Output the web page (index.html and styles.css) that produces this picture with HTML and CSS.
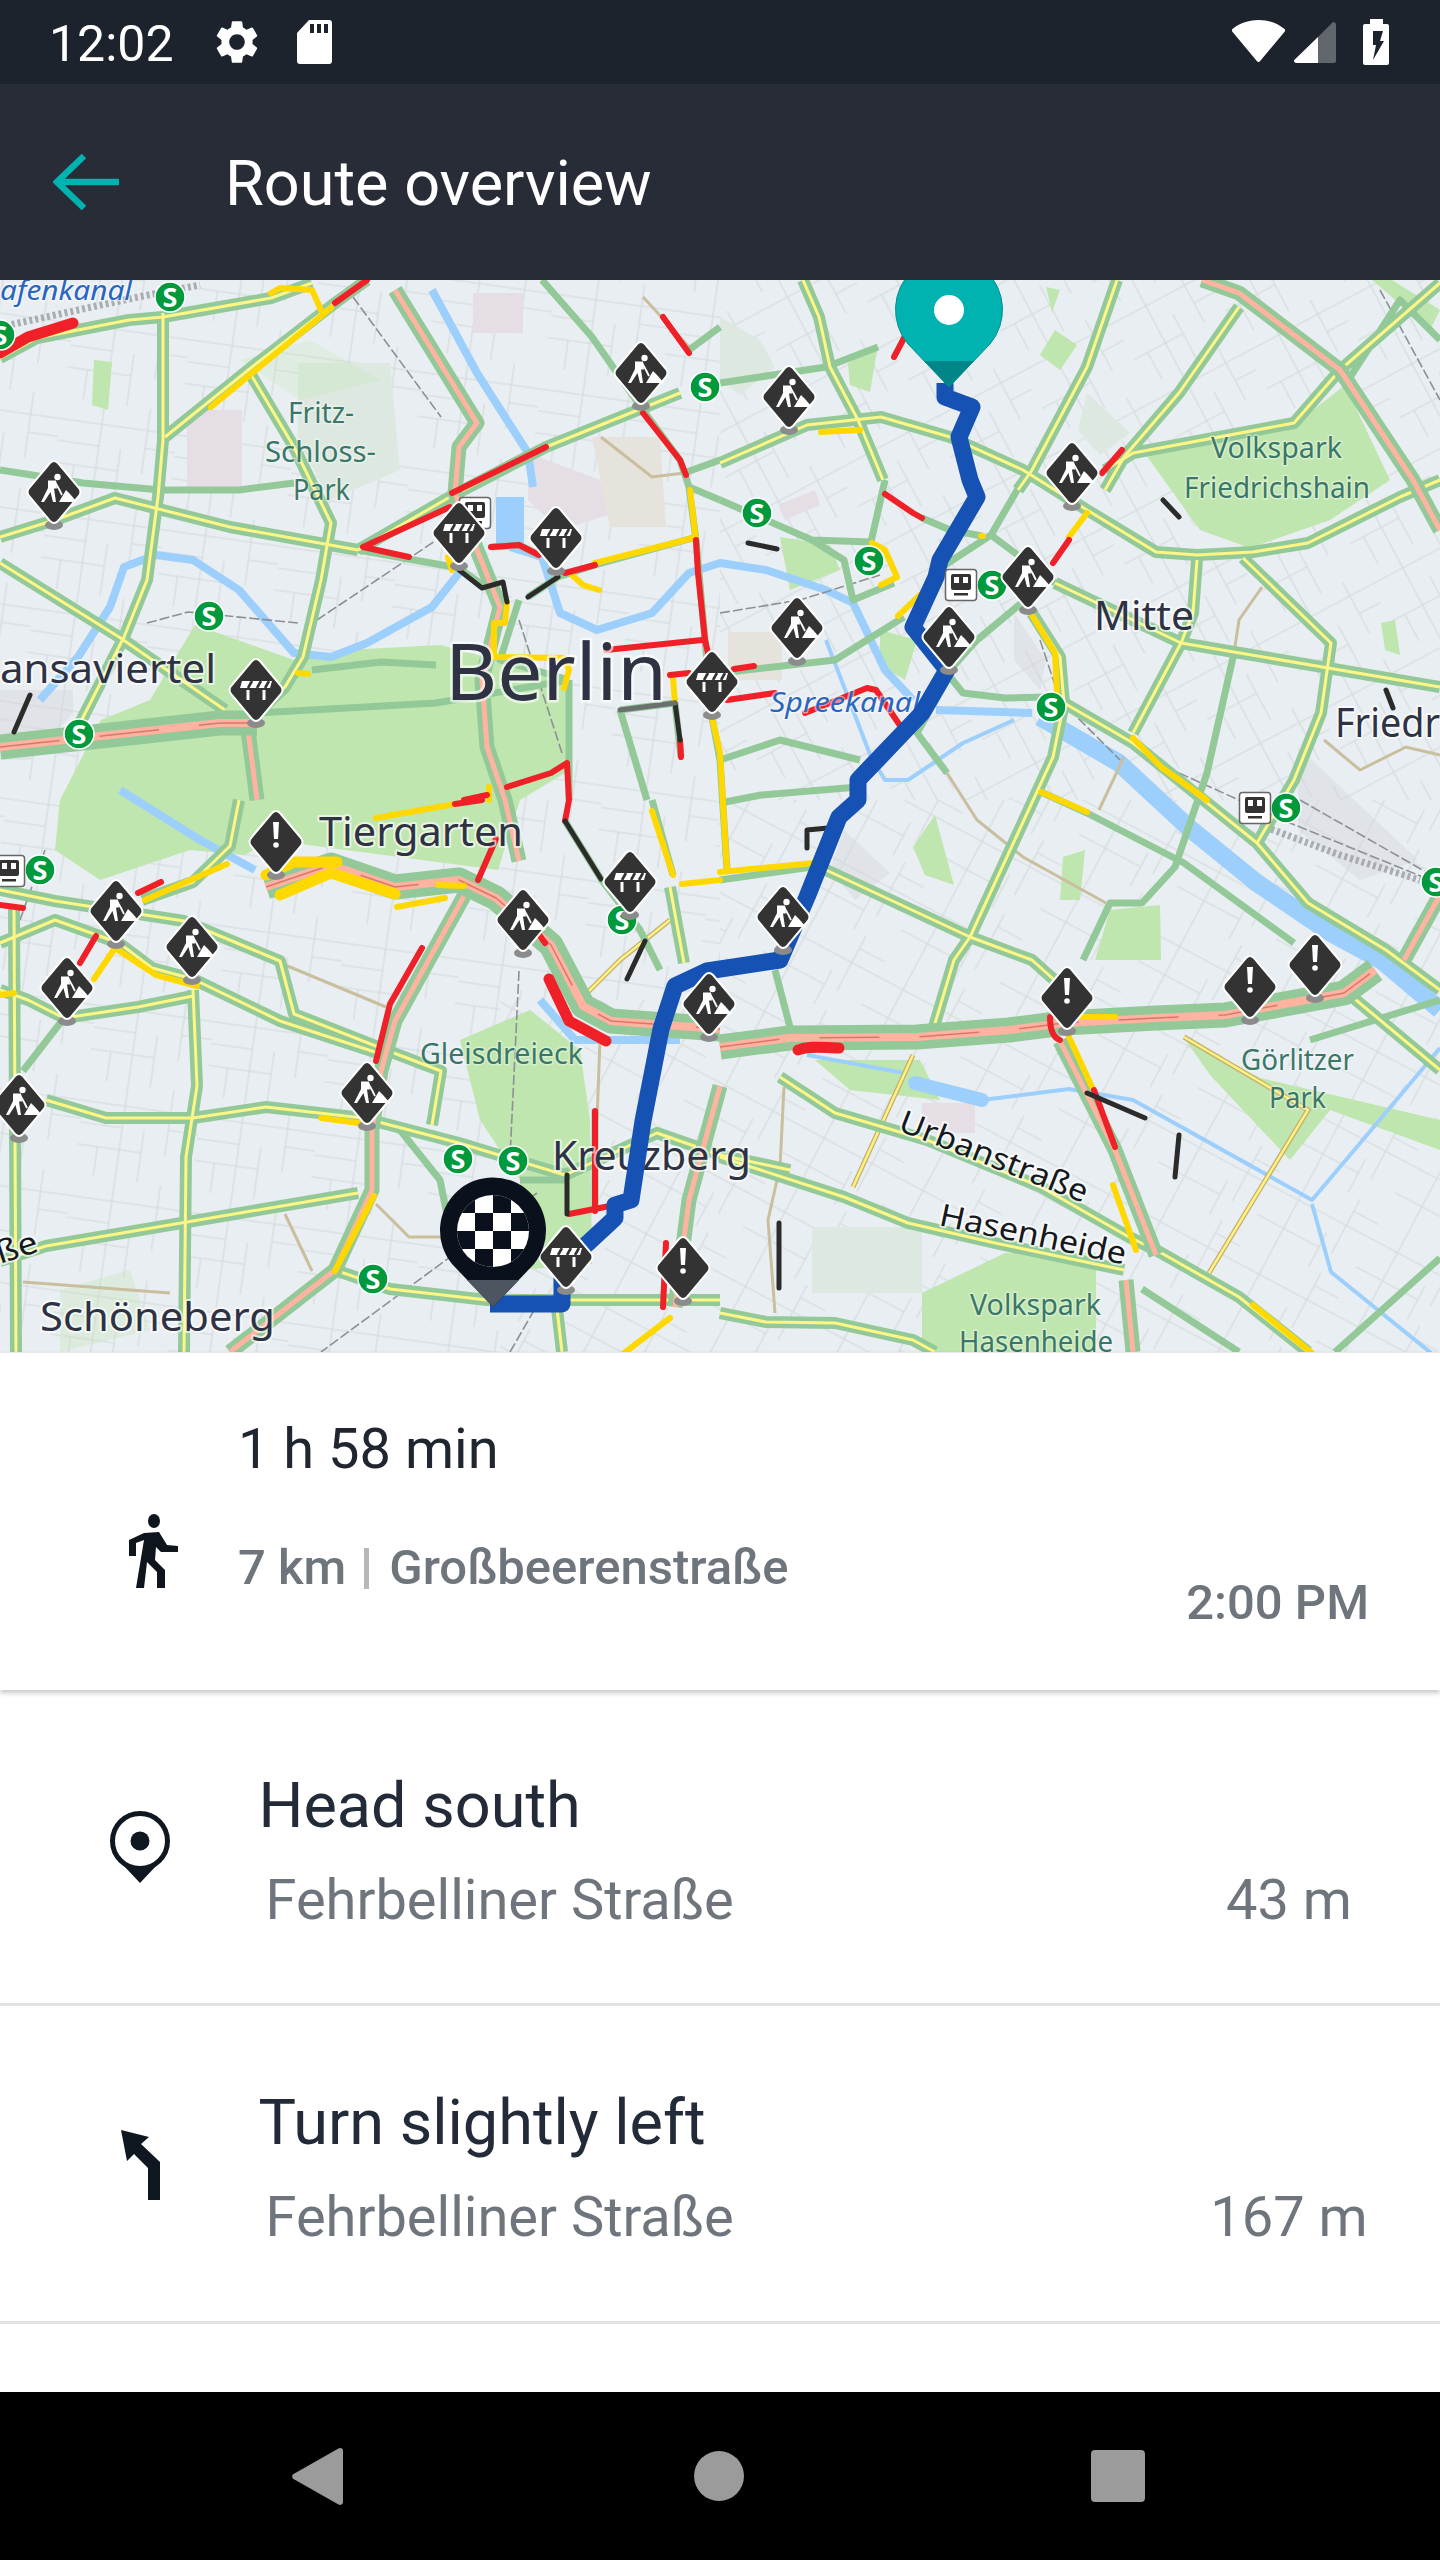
FILE: index.html
```html
<!DOCTYPE html>
<html lang="en">
<head>
<meta charset="utf-8">
<title>Route overview</title>
<link rel="stylesheet" href="styles.css">
</head>
<body>
<div class="page">
  <div class="statusbar">
    <span class="clock">12:02</span>
    <svg class="st-gear" viewBox="0 0 24 24"><path d="M19.14 12.94c.04-.3.06-.61.06-.94 0-.32-.02-.64-.07-.94l2.03-1.58c.18-.14.23-.41.12-.61l-1.92-3.32c-.12-.22-.37-.29-.59-.22l-2.39.96c-.5-.38-1.03-.7-1.62-.94l-.36-2.54c-.04-.24-.24-.41-.48-.41h-3.84c-.24 0-.43.17-.47.41l-.36 2.54c-.59.24-1.13.57-1.62.94l-2.39-.96c-.22-.08-.47 0-.59.22L2.74 8.87c-.12.21-.08.47.12.61l2.03 1.58c-.05.3-.09.63-.09.94s.02.64.07.94l-2.03 1.58c-.18.14-.23.41-.12.61l1.92 3.32c.12.22.37.29.59.22l2.39-.96c.5.38 1.03.7 1.62.94l.36 2.54c.05.24.24.41.48.41h3.84c.24 0 .44-.17.47-.41l.36-2.54c.59-.24 1.13-.56 1.62-.94l2.39.96c.22.08.47 0 .59-.22l1.92-3.32c.12-.22.07-.47-.12-.61l-2.01-1.58zM12 15.6c-1.98 0-3.6-1.62-3.6-3.6s1.62-3.6 3.6-3.6 3.6 1.62 3.6 3.6-1.62 3.6-3.6 3.6z"/></svg>
    <svg class="st-sd" viewBox="0 0 35 44"><path fill-rule="evenodd" d="M12 0H32a3 3 0 0 1 3 3V41a3 3 0 0 1-3 3H3a3 3 0 0 1-3-3V13ZM13 4V13H17V4ZM20 4V13H24V4ZM27 4V13H31V4Z"/></svg>
    <span class="st-spacer"></span>
    <svg class="st-wifi" viewBox="0 0 53 42"><path d="M26.5 0C16 0 7 3.500 0.500 9a2 2 0 0 0-.3 2.500L24.800 41a2.200 2.200 0 0 0 3.400 0L52.800 11.500a2 2 0 0 0-.3-2.500C46 3.500 37 0 26.500 0Z"/></svg>
    <svg class="st-signal" viewBox="0 0 42 41"><path class="st-dim" d="M39 0a3 3 0 0 1 3 3V39a2 2 0 0 1-2 2H24V15Z"/><path d="M24 15V41H2a2 2 0 0 1-1.500-3.300Z"/></svg>
    <svg class="st-batt" viewBox="0 0 26 46"><path d="M7 0H20V5H24a2 2 0 0 1 2 2V44a2 2 0 0 1-2 2H2a2 2 0 0 1-2-2V7a2 2 0 0 1 2-2H7Z"/><path class="st-bolt" d="M10 12H20L17 22H21L10 41 13 26H10Z"/></svg>
  </div>

  <header class="appbar">
    <svg class="back" viewBox="0 0 66 56"><path d="M31 2 4 28 31 54M4 28H66"/></svg>
    <h1 class="title">Route overview</h1>
  </header>

  <div class="map">
    <svg class="map-svg" viewBox="0 280 1440 1072" xmlns="http://www.w3.org/2000/svg">
      <defs>
        <pattern id="g1" width="118" height="96" patternUnits="userSpaceOnUse" patternTransform="rotate(8)">
          <path class="grid" d="M0 22H118M0 66H64M42 0V96M88 0V66M64 44V96M0 44H42M88 40H118M20 66V96"/>
        </pattern>
        <pattern id="g2" width="104" height="88" patternUnits="userSpaceOnUse" patternTransform="rotate(-28)">
          <path class="grid" d="M0 16H104M0 58H56M36 0V88M80 0V58M56 36V88M80 36H104M16 58V88"/>
        </pattern>
        <pattern id="g3" width="112" height="84" patternUnits="userSpaceOnUse" patternTransform="rotate(28)">
          <path class="grid" d="M0 30H112M0 62H70M30 0V84M84 0V62M70 46V84M84 14H112"/>
        </pattern>

        <symbol id="base" viewBox="-30 -36 60 76" overflow="visible">
          <ellipse class="ic-dot" cx="0" cy="33" rx="9" ry="5"/>
          <path class="ic-body" d="M-4 -29Q0 -33 4 -29L25 -4Q28 0 25 4L4 29Q0 33-4 29L-25 4Q-28 0-25-4Z"/>
        </symbol>
        <g id="work">
          <use href="#base" x="-30" y="-36" width="60" height="76"/>
          <circle class="ic-w" cx="3.500" cy="-15" r="3.200"/>
          <path class="ic-w" d="M-6-11.500H2L3-3.500H0L2 10H-1L-3.500 0-10 10H-13L-6-4Z"/>
          <path class="ic-l" d="M1-10 5-3 8 3"/>
          <path class="ic-w" d="M5 10 12-2 16 2 23 10Z"/>
        </g>
        <g id="barrier">
          <use href="#base" x="-30" y="-36" width="60" height="76"/>
          <path class="ic-w" d="M-14-9H16L14-2H-16Z"/>
          <path class="ic-s" d="M-8-2-4-9M1-2 5-9M9-2 13-9"/>
          <path class="ic-w" d="M-9.500 0H-6.500V10H-9.500ZM6.500 0H9.500V10H6.500Z"/>
        </g>
        <g id="warn">
          <use href="#base" x="-30" y="-36" width="60" height="76"/>
          <path class="ic-w" d="M-3-20H3L2-3H-2Z"/>
          <circle class="ic-w" cx="0" cy="3" r="2.800"/>
        </g>
        <g id="sb">
          <circle class="sb-c" cx="0" cy="0" r="15"/>
          <text class="sb-t" x="0" y="9.500">S</text>
        </g>
        <g id="train">
          <rect class="tr-o" x="-15.500" y="-15.500" width="31" height="31" rx="3"/>
          <rect class="tr-d" x="-10" y="-11" width="20" height="16" rx="2"/>
          <path class="ic-w" d="M-7-8H-2V-2H-7ZM2-8H7V-2H2Z"/>
          <rect class="tr-d" x="-7" y="8" width="14" height="2.500"/>
        </g>

        <g id="ry">
          <path d="M0 358L37 338 129 320 163 317 271 298 312 283"/>
          <path d="M163 313L163 440 158 497 147 580 124 637 78 727"/>
          <path d="M165 437L252 367 335 303 367 280"/>
          <path d="M250 373L294 447 331 523 321 580 303 657 285 687 257 713"/>
          <path d="M0 537L55 520 115 498 230 527 358 550"/>
          <path d="M0 563L119 637 225 710"/>
          <path d="M358 550L450 497 546 447 638 410 680 393"/>
          <path d="M803 280L819 317 830 367 858 420 883 480"/>
          <path d="M720 463L807 425 881 417 950 437 1023 470 1087 510 1156 552 1197 555 1253 552 1308 543 1400 497 1440 480"/>
          <path d="M1117 280L1087 367 1032 470 1018 490"/>
          <path d="M1239 307L1179 393 1124 457 1105 490"/>
          <path d="M1440 283L1340 370 1294 423 1133 453 1105 470"/>
          <path d="M1243 558L1331 643 1321 713 1294 780 1257 843"/>
          <path d="M1055 583L1181 643 1440 687"/>
          <path d="M1197 560L1193 613 1181 643 1133 733"/>
          <path d="M1064 703L1133 743 1257 843 1308 903 1386 950 1440 990"/>
          <path d="M1032 613L1060 657 1064 703 1053 757 1018 833 970 937 954 960 930 1040"/>
          <path d="M826 870L970 937 1032 960 1060 985"/>
          <path d="M0 890L55 901 184 921 280 961 294 1014 386 1050 441 1071 432 1125"/>
          <path d="M0 943L55 920 119 943 152 968 193 979 280 1021 381 1054"/>
          <path d="M193 990L197 1086 186 1157 184 1352"/>
          <path d="M14 907L16 1352"/>
          <path d="M64 1018L138 1007 193 996"/>
          <path d="M0 990L28 1000 64 1018"/>
          <path d="M46 1100L106 1118 193 1118 266 1107 363 1118 459 1143 565 1175"/>
          <path d="M0 1261L46 1246 358 1193"/>
          <path d="M335 1270L390 1289 487 1300 720 1300"/>
          <path d="M239 800L230 846 193 882 142 900"/>
          <path d="M670 887L684 963"/>
          <path d="M780 1077L835 1113 927 1140 1041 1187 1129 1237 1156 1250"/>
          <path d="M720 1157L844 1197 908 1223 995 1243 1124 1270"/>
          <path d="M1156 1250L1239 1297 1308 1352"/>
          <path d="M720 1313L766 1322 835 1323 913 1340 935 1352"/>
          <path d="M565 1175L657 1133 720 1155 790 1170"/>
          <path d="M1344 990L1440 1070"/>
          <path d="M556 1300L562 1352"/>
        </g>
        <g id="rp">
          <path d="M395 290L477 423 459 447 455 493 477 550 500 607 482 680 487 747 505 800 519 861"/>
          <path d="M1202 280L1239 293 1340 370 1413 480 1440 530"/>
          <path d="M248 730L257 800"/>
          <path d="M464 896L395 1021 381 1071 372 1129 372 1190 335 1270 230 1352"/>
          <path d="M1060 1041L1115 1150 1156 1255"/>
          <path d="M1126 1280L1133 1352"/>
          <path d="M675 1307L689 1200 720 1086"/>
          <path d="M1404 960L1440 895"/>
        </g>
        <g id="rw">
          <path d="M0 747L220 723 257 723"/>
          <path d="M720 1047L789 1038 917 1037 1009 1030 1064 1023 1156 1018 1225 1015 1344 993 1375 970"/>
          <path d="M266 887L331 865 395 887 459 880 496 898 551 945 583 1006 611 1021 720 1029"/>
        </g>
      </defs>

      <rect class="m-bg" x="0" y="280" width="1440" height="1072"/>

      <g class="m-grey">
        <path d="M0 690H73V713L30 760H0Z"/><path d="M1298 747 1418 860 1360 880 1298 830Z"/>
        <path d="M1014 613 1046 660 1040 690 1014 660Z"/><path d="M844 830 890 873 855 900 830 870Z"/>
      </g>
      <polygon fill="url(#g1)" points="0,280 720,280 720,1000 0,1000"/>
      <polygon fill="url(#g1)" points="0,1000 500,1000 500,1352 0,1352"/>
      <polygon fill="url(#g2)" points="720,280 1440,280 1440,800 720,800"/>
      <polygon fill="url(#g3)" points="720,800 1440,800 1440,1352 720,1352"/>
      <polygon fill="url(#g3)" points="500,1000 720,1000 720,1352 500,1352"/>

      <g class="m-pink">
        <path d="M187 410H242V487H187Z"/><path d="M473 293H523V333H473Z"/><path d="M528 453 600 480 615 513 560 530 528 500Z"/>
        <path d="M922 1103H975V1133H922Z"/><path d="M778 505 815 490 820 505 785 520Z"/>
      </g>
      <g class="m-beige"><path d="M592 437H660L666 527 610 527Z"/><path d="M728 632H782V680H728Z"/></g>
      <g class="m-pale">
        <path d="M298 363 390 363 400 470 330 500 298 440Z"/><path d="M812 1227H922V1293H812Z"/>
        <path d="M720 317 760 340 775 367 740 395 720 380Z"/><path d="M1087 393 1130 433 1100 455 1078 430Z"/>
      </g>
      <g class="m-park">
        <path d="M101 720 150 700 195 625 294 660 345 650 441 645 569 680 570 770 520 800 498 870 270 840 245 855 190 850 100 880 55 850 60 800Z"/>
        <path d="M1146 455 1294 425 1345 385 1390 480 1330 520 1250 548 1200 530Z"/>
        <path d="M1046 287 1060 290 1052 312ZM1055 330 1077 345 1060 370 1040 355Z"/>
        <path d="M848 363 878 345 870 392 850 385Z"/><path d="M1372 280H1392L1440 310 1430 330Z"/>
        <path d="M780 537 830 545 840 570 790 590Z"/><path d="M880 630 917 640 905 680 880 665Z"/>
        <path d="M913 847 935 815 954 885 925 875Z"/><path d="M1063 857 1085 850 1080 900 1060 900Z"/>
        <path d="M1110 910 1160 905 1161 960 1095 960Z"/><path d="M1381 623 1395 620 1400 655 1385 650Z"/>
        <path d="M1184 1038 1260 1078 1440 1120 1440 1150 1330 1110 1290 1160 1210 1075Z"/>
        <path d="M922 1293 1005 1253 1096 1253 1096 1352 922 1352Z"/><path d="M815 1060H920L940 1100 850 1090Z"/>
        <path d="M460 1040 530 1010 580 1050 590 1120 592 1264 520 1270 520 1180 480 1120Z"/>
        <path d="M240 360 310 340 380 380 300 400Z" opacity=".25"/>
        <path d="M94 360 112 362 108 410 92 405Z"/><path d="M60 1290 130 1270 150 1330 60 1352Z" opacity=".3"/>
      </g>

      <g class="water">
        <path class="w1" d="M432 290 477 373 528 453 533 487"/>
        <path class="w3" d="M510 497V547"/>
        <path class="w1" d="M510 547 542 557 560 613 597 630 652 613 689 573 720 563 766 570 826 590 853 603 885 670 913 700"/>
        <path class="w1" d="M459 573 432 607 367 643 331 657 294 653 239 590 193 560 156 555 124 567 110 607 78 657 40 700"/>
        <path class="w1" d="M936 710 1032 713"/>
        <path class="w2" d="M1040 717 1119 763 1188 827 1257 883 1331 933 1381 960 1440 1010"/>
        <path class="w0" d="M826 640 871 757 885 780 908 780 963 743 1014 720"/>
        <path class="w0" d="M807 1055 904 1073"/>
        <path class="w4" d="M915 1083 982 1100"/>
        <path class="w0" d="M982 1100 1069 1089 1133 1100 1312 1200 1372 1129 1440 1048"/>
        <path class="w0" d="M1312 1204 1331 1272 1436 1357"/>
        <path class="w1" d="M120 790 200 840 255 870"/>
        <path class="w1" d="M540 1000 575 1040 680 1040"/>
      </g>

      <g class="tan">
        <path d="M1262 587 1239 620 1234 653"/><path d="M947 773 977 820 1023 857 1106 903"/><path d="M1124 757 1099 810"/>
        <path d="M1324 740 1360 770 1406 747 1440 755"/><path d="M285 1214 312 1271"/><path d="M376 1204 409 1237 441 1237"/>
        <path d="M266 957 386 1007"/><path d="M784 1087 780 1167 768 1220 775 1313"/><path d="M23 1282 170 1293"/>
        <path d="M601 437 652 477 684 473"/><path d="M643 297 689 347"/><path d="M600 1040 597 1120"/>
      </g>
      <g class="rail">
        <path d="M317 620 441 537"/><path d="M353 297 441 417"/><path d="M147 623 188 612 298 623"/>
        <path d="M1179 773 1290 823 1423 877"/><path d="M519 971 510 1157"/><path d="M537 1193 321 1352"/><path d="M519 620 562 753"/>
        <path d="M1040 640 1060 700"/><path d="M1060 700 1120 760"/><path d="M720 613 800 600 880 575"/><path d="M1380 290 1440 400"/>
        <path d="M1300 800 1440 880"/><path d="M45 850 20 920"/><path d="M510 1352 540 1300"/>
      </g>
      <path class="rail-w" d="M0 327 138 297 200 285"/>
      <path class="rail-w" d="M1260 825 1340 855 1420 880"/>

      <g class="thin-case"><path d="M1184 1037 1308 1110 1209 1273"/><path d="M913 1055 853 1187"/><path d="M580 1000 620 960 670 920"/></g>
      <g class="thin-core"><path d="M1184 1037 1308 1110 1209 1273"/><path d="M913 1055 853 1187"/><path d="M580 1000 620 960 670 920"/></g>

      <g class="rg">
        <path d="M294 483 239 490 161 490 83 483 0 470"/><path d="M358 550 459 568"/>
        <path d="M720 383 826 367 878 347"/><path d="M720 500 812 540 871 542 885 480"/><path d="M812 540 844 560 853 600 894 583"/>
        <path d="M950 677 963 693 1005 698 1046 697"/><path d="M720 673 835 660 867 640 904 617"/><path d="M950 670 977 640 1025 600"/>
        <path d="M720 803 761 795 858 787"/><path d="M1041 792 1087 813 1184 863 1294 943"/><path d="M1234 653 1207 773 1175 867 1142 903 1110 903 1083 960"/>
        <path d="M720 880 812 867"/><path d="M775 970 791 1031"/><path d="M1142 1289 1239 1352"/><path d="M1335 1352 1440 1258"/>
        <path d="M64 1018 23 1071"/><path d="M257 713 436 703 569 680"/><path d="M720 760 780 740 860 760"/>
        <path d="M1310 1040 1440 1000"/><path d="M520 1180 565 1180"/>
        <path d="M542 280 592 337 643 410 680 460 689 487 696 540 705 640 712 717 720 760 727 870"/>
        <path d="M459 568 507 602"/><path d="M528 597 558 577 595 565 693 538"/><path d="M620 710 675 703 681 757"/>
        <path d="M569 680V800"/><path d="M620 710 647 800"/><path d="M491 547 519 545 539 555"/>
        <path d="M519 600 500 660 569 680"/><path d="M312 670 381 662 436 665"/><path d="M684 473 720 460"/><path d="M689 487 720 500"/>
        <path d="M689 350 720 327"/><path d="M1023 480 991 535 945 565"/><path d="M991 535 1055 583"/><path d="M922 518 950 530 982 536"/>
        <path d="M947 680 917 733 947 773"/><path d="M565 821 601 879 640 930 660 970"/><path d="M652 800 673 875"/>
        <path d="M0 1352 0 1352"/><path d="M595 1111V1211"/><path d="M1087 1093 1145 1118" class="rg-none"/>
        <path d="M1345 385 1400 300 1440 340"/><path d="M400 1130 440 1180 452 1240"/>
      </g>
      <use class="ry-case" href="#ry"/>
      <use class="ry-core" href="#ry"/>
      <use class="rp-case" href="#rp"/>
      <use class="rp-core" href="#rp"/>
      <use class="rw-case" href="#rw"/>
      <use class="rw-core" href="#rw"/>
      <use class="rw-line" href="#rw"/>

      <g class="t-y">
        <path d="M271 293 280 288 312 290 321 310"/><path d="M331 308 211 407"/><path d="M448 557 452 570"/>
        <path d="M507 602 505 623 494 623 494 657 565 658 569 670 564 688"/><path d="M595 563 693 538"/>
        <path d="M572 575 583 585 599 590"/><path d="M690 490 696 540"/><path d="M673 677 675 703"/>
        <path d="M712 717 720 753 727 870"/><path d="M489 787V800"/><path d="M298 673 308 674"/>
        <path d="M872 543 885 550 897 577 881 585"/><path d="M920 595 898 616"/><path d="M981 536H983"/>
        <path d="M1087 513 1069 537"/><path d="M1030 612 1055 653 1057 693"/><path d="M1133 738 1161 767 1207 800"/>
        <path d="M1041 792 1087 812"/><path d="M720 872 814 863"/><path d="M821 432 860 430"/>
        <path d="M438 885 464 886"/><path d="M397 907 445 898"/><path d="M376 818 455 804"/><path d="M145 900 227 864"/>
        <path d="M94 979 115 948"/><path d="M115 948 156 975 197 986"/><path d="M652 811 673 875"/><path d="M682 884 720 880"/>
        <path d="M374 1196 335 1271"/><path d="M615 1360 670 1318"/><path d="M0 995 14 993"/><path d="M321 1118 358 1123"/>
        <path d="M1078 1017H1115"/><path d="M1069 1037 1092 1087"/><path d="M1113 1185 1136 1250"/><path d="M1253 1305 1312 1353"/>
      </g>
      <g class="t-yw"><path d="M266 875 294 862 337 862"/><path d="M280 895 331 873 395 894"/></g>
      <g class="t-r">
        <path d="M335 303 367 280"/><path d="M663 317 689 353"/><path d="M643 413 680 460 686 475"/><path d="M452 493 546 447"/>
        <path d="M450 507 363 547 409 557"/><path d="M565 573 595 565"/><path d="M491 547 519 545 539 555"/>
        <path d="M696 540 698 573 705 640 709 657"/><path d="M606 650 702 640"/><path d="M670 675 689 673"/><path d="M680 740 681 757"/>
        <path d="M507 787 551 773 567 763 569 800 565 821"/><path d="M464 800 487 795"/><path d="M885 494 913 513 922 518"/>
        <path d="M734 669 754 666"/><path d="M727 700 775 693"/><path d="M805 713 867 688 876 690 901 727"/><path d="M1069 540 1053 563"/>
        <path d="M904 338 894 357"/><path d="M1122 450 1102 473"/><path d="M455 804 482 800"/><path d="M138 893 161 882"/>
        <path d="M80 963 96 936"/><path d="M376 1061 390 1004 422 948"/><path d="M478 880 496 839"/><path d="M595 1111V1211"/>
        <path d="M569 1214 615 1205"/><path d="M666 1243 663 1307"/><path d="M0 905 23 908"/><path d="M540 936 545 943"/>
        <path d="M1050 1017C1050 1030 1054 1038 1060 1040"/><path d="M1094 1090 1115 1147"/>
      </g>
      <g class="t-rw"><path d="M0 353 28 337 73 323"/><path d="M549 979 569 1021 606 1041"/><path d="M798 1050C810 1045 825 1048 839 1048"/></g>
      <g class="t-k">
        <path d="M459 570 482 588 503 582 507 602"/><path d="M528 597 558 577"/><path d="M675 703 680 740"/><path d="M30 695 14 732"/>
        <path d="M748 543 777 549"/><path d="M1163 500 1179 517"/><path d="M1386 690 1393 708"/><path d="M828 828 807 830 807 848"/>
        <path d="M565 821 601 879"/><path d="M645 941 627 979"/><path d="M567 1175V1214"/><path d="M1087 1093 1145 1118"/>
        <path d="M1179 1135 1175 1177"/><path d="M779 1223V1288"/>
      </g>
      <path class="t-g" d="M620 710 675 703"/>

      <g class="lb">
        <text class="lb-big" x="445" y="700" textLength="222" lengthAdjust="spacingAndGlyphs">Berlin</text>
        <text class="lb-mid" x="0" y="683" textLength="216" lengthAdjust="spacingAndGlyphs">ansaviertel</text>
        <text class="lb-mid" x="1094" y="630" textLength="100" lengthAdjust="spacingAndGlyphs">Mitte</text>
        <text class="lb-mid" x="1335" y="737" textLength="105" lengthAdjust="spacingAndGlyphs">Friedr</text>
        <text class="lb-mid" x="319" y="846" textLength="204" lengthAdjust="spacingAndGlyphs">Tiergarten</text>
        <text class="lb-mid" x="552" y="1170" textLength="199" lengthAdjust="spacingAndGlyphs">Kreuzberg</text>
        <text class="lb-mid" x="40" y="1331" textLength="235" lengthAdjust="spacingAndGlyphs">Schöneberg</text>
        <text class="lb-park" x="288" y="423" textLength="66" lengthAdjust="spacingAndGlyphs">Fritz-</text>
        <text class="lb-park" x="265" y="462" textLength="111" lengthAdjust="spacingAndGlyphs">Schloss-</text>
        <text class="lb-park" x="293" y="500" textLength="57" lengthAdjust="spacingAndGlyphs">Park</text>
        <text class="lb-park" x="1211" y="458" textLength="131" lengthAdjust="spacingAndGlyphs">Volkspark</text>
        <text class="lb-park" x="1184" y="498" textLength="186" lengthAdjust="spacingAndGlyphs">Friedrichshain</text>
        <text class="lb-park" x="420" y="1064" textLength="163" lengthAdjust="spacingAndGlyphs">Gleisdreieck</text>
        <text class="lb-park" x="1241" y="1070" textLength="113" lengthAdjust="spacingAndGlyphs">Görlitzer</text>
        <text class="lb-park" x="1269" y="1108" textLength="57" lengthAdjust="spacingAndGlyphs">Park</text>
        <text class="lb-park" x="970" y="1315" textLength="131" lengthAdjust="spacingAndGlyphs">Volkspark</text>
        <text class="lb-park" x="959" y="1352" textLength="154" lengthAdjust="spacingAndGlyphs">Hasenheide</text>
        <text class="lb-water" x="0" y="300" textLength="132" lengthAdjust="spacingAndGlyphs">afenkanal</text>
        <text class="lb-water" x="770" y="712" textLength="150" lengthAdjust="spacingAndGlyphs">Spreekanal</text>
        <text class="lb-street" transform="translate(897 1130) rotate(21.400)" textLength="200" lengthAdjust="spacingAndGlyphs">Urbanstraße</text>
        <text class="lb-street" transform="translate(938 1225) rotate(12)" textLength="190" lengthAdjust="spacingAndGlyphs">Hasenheide</text>
        <text class="lb-street" transform="translate(0 1264) rotate(-18)" textLength="42" lengthAdjust="spacingAndGlyphs">ße</text>
      </g>

      <path class="route" d="M945 383V397L972 407 959 437 970 480 977 497 940 560 936 577 913 627 947 670 922 713 858 780V800L839 817 807 897 780 960 707 971 675 986 661 1029 643 1121 631 1200 615 1205V1218L588 1243 562 1265V1304H490"/>

      <use href="#sb" x="170" y="297"/><use href="#sb" x="0" y="335"/><use href="#sb" x="705" y="387"/><use href="#sb" x="209" y="616"/>
      <use href="#sb" x="79" y="734"/><use href="#sb" x="757" y="513"/><use href="#sb" x="869" y="561"/><use href="#sb" x="992" y="585"/>
      <use href="#sb" x="1051" y="707"/><use href="#sb" x="1286" y="808"/><use href="#sb" x="1436" y="882"/><use href="#sb" x="40" y="870"/>
      <use href="#sb" x="622" y="920"/><use href="#sb" x="458" y="1159"/><use href="#sb" x="513" y="1161"/><use href="#sb" x="373" y="1279"/>
      <use href="#train" x="961" y="585"/><use href="#train" x="1255" y="808"/><use href="#train" x="9" y="871"/><use href="#train" x="475" y="513"/>

      <use href="#work" x="54" y="492"/><use href="#work" x="641" y="373"/><use href="#work" x="789" y="397"/><use href="#work" x="1072" y="473"/>
      <use href="#work" x="1028" y="577"/><use href="#work" x="797" y="628"/><use href="#work" x="949" y="637"/><use href="#work" x="783" y="917"/>
      <use href="#work" x="116" y="911"/><use href="#work" x="192" y="947"/><use href="#work" x="67" y="988"/><use href="#work" x="523" y="920"/>
      <use href="#work" x="709" y="1004"/><use href="#work" x="367" y="1093"/><use href="#work" x="19" y="1105"/>
      <use href="#barrier" x="459" y="533"/><use href="#barrier" x="556" y="538"/><use href="#barrier" x="256" y="690"/><use href="#barrier" x="712" y="682"/>
      <use href="#barrier" x="630" y="882"/><use href="#barrier" x="566" y="1257"/>
      <use href="#warn" x="276" y="842"/><use href="#warn" x="1067" y="998"/><use href="#warn" x="1250" y="987"/><use href="#warn" x="1315" y="965"/><use href="#warn" x="683" y="1268"/>

      <g class="pin-end">
        <path class="pin-a" d="M949 387 908 344A53.500 53.500 0 1 1 990 344Z"/>
        <path class="pin-b" d="M949 387 924 361H974Z"/>
        <circle class="ic-w" cx="949" cy="310" r="15"/>
      </g>
      <g class="pin-start">
        <path class="pin-c" d="M493 1307 452 1264A53 53 0 1 1 534 1264Z"/>
        <path class="pin-d" d="M493 1307 467 1280H519Z"/>
        <clipPath id="chk"><circle cx="493" cy="1231" r="36"/></clipPath>
        <circle class="ic-w" cx="493" cy="1231" r="36"/>
        <g clip-path="url(#chk)">
          <path class="pin-c" d="M457 1195h18v18h-18zM493 1195h18v18h-18zM475 1213h18v18h-18zM511 1213h18v18h-18zM457 1231h18v18h-18zM493 1231h18v18h-18zM475 1249h18v18h-18zM511 1249h18v18h-18z"/>
        </g>
      </g>
    </svg>
  </div>

  <section class="summary">
    <div class="duration">1 h 58 min</div>
    <div class="sum-row">
      <svg class="walk" viewBox="129 1514 49 74"><ellipse cx="154" cy="1521" rx="6" ry="7"/><path d="M144 1533 159 1532 167 1545 178 1546V1552H161L156 1547 155 1560 165 1570V1588H157V1572L147 1562 144 1588H136L144 1540 136 1543V1556H129V1540Z"/></svg>
      <div class="meta"><span>7 km</span><i class="sep"></i><span>Großbeerenstraße</span></div>
      <div class="eta">2:00 PM</div>
    </div>
  </section>

  <section class="step step-first">
    <svg class="step-ic" viewBox="0 0 60 72"><circle class="pin-ring" cx="30" cy="30" r="27.500"/><circle cx="30" cy="30" r="9.500"/><path d="M30 72 14 55H46Z"/></svg>
    <div class="step-body">
      <div class="step-title">Head south</div>
      <div class="step-sub"><span class="street">Fehrbelliner Straße</span><span class="dist">43 m</span></div>
    </div>
  </section>
  <section class="step step-second">
    <svg class="step-ic" viewBox="0 0 60 72"><path d="M11 2 39 9 31 16 50 34V72H38V40L24 26 17 33Z"/></svg>
    <div class="step-body">
      <div class="step-title">Turn slightly left</div>
      <div class="step-sub"><span class="street">Fehrbelliner Straße</span><span class="dist">167 m</span></div>
    </div>
  </section>
  <div class="list-rest"></div>

  <nav class="navbar">
    <svg class="nav-back" viewBox="0 0 51 57"><path d="M48 0a3 3 0 0 1 3 3V54a3 3 0 0 1-4.500 2.500L1.500 31a3 3 0 0 1 0-5L46.500.500A3 3 0 0 1 48 0Z"/></svg>
    <span class="nav-home"></span>
    <span class="nav-recent"></span>
  </nav>
</div>
</body>
</html>
```

FILE: styles.css
```css
* { box-sizing: border-box; }
html, body { margin: 0; padding: 0; background: #fff; }
.page { width: 1440px; height: 2560px; display: flex; flex-direction: column; overflow: hidden; font-family: Roboto, "Liberation Sans", sans-serif; }

.statusbar { height: 84px; flex: none; background: #1c232d; display: flex; align-items: flex-start; padding: 0 51px; color: #fff; fill: #fff; }
.clock { font-size: 50px; line-height: 56px; margin: 16px 0 0 -2px; width: 123px; }
.st-gear { width: 52px; height: 52px; margin: 16px 0 0 39px; }
.st-sd { width: 35px; height: 44px; margin: 20px 0 0 34px; }
.st-spacer { flex: 1; }
.st-wifi { width: 53px; height: 42px; margin-top: 20px; }
.st-signal { width: 42px; height: 41px; margin: 22px 0 0 9px; }
.st-dim { fill: #62676e; }
.st-batt { width: 26px; height: 46px; margin: 19px 0 0 27px; }
.st-bolt { fill: #1c232d; }

.appbar { height: 196px; flex: none; background: #282c37; display: flex; align-items: flex-start; }
.back { width: 66px; height: 56px; margin: 70px 0 0 53px; fill: none; stroke: #00b2b0; stroke-width: 6.5; }
.title { margin: 65px 0 0 106px; font-weight: 400; font-size: 63px; line-height: 70px; color: #fff; white-space: nowrap; }

.map { height: 1072px; flex: none; overflow: hidden; }
.map-svg { display: block; width: 1440px; height: 1072px; }
.m-bg { fill: #e9eef2; }
.grid { fill: none; stroke: #d4d8da; stroke-width: 1.1; }
.m-grey { fill: #e0e3e7; }
.m-pink { fill: #e5dee4; }
.m-beige { fill: #e6e3dc; }
.m-pale { fill: #dce8e0; }
.m-park { fill: #bfe6ae; }
.water { fill: none; stroke: #9dcffc; stroke-linejoin: round; }
.w0 { stroke-width: 4; }
.w1 { stroke-width: 8; }
.w2 { stroke-width: 18; }
.w3 { stroke-width: 28; }
.w4 { stroke-width: 14; stroke-linecap: round; }
.tan { fill: none; stroke: #c9bf9e; stroke-width: 3; }
.rail { fill: none; stroke: #8d9094; stroke-width: 1.6; stroke-dasharray: 10 3; }
.rail-w { fill: none; stroke: #8f9295; stroke-width: 7; stroke-dasharray: 3 3; opacity: .7; }
.thin-case { fill: none; stroke: #c4ad72; stroke-width: 5; }
.thin-core { fill: none; stroke: #fdf27d; stroke-width: 2.5; }
.rg { fill: none; stroke: #93c998; stroke-width: 7; stroke-linejoin: round; }
.rg-none { stroke: none; }
.ry-case, .ry-core, .rp-case, .rp-core, .rw-case, .rw-core, .rw-line { fill: none; stroke-linejoin: round; }
.ry-case { stroke: #93c998; stroke-width: 12; }
.ry-core { stroke: #fdf685; stroke-width: 3; }
.rp-case { stroke: #93c998; stroke-width: 15; }
.rp-core { stroke: #ffb3a0; stroke-width: 5; }
.rw-case { stroke: #93c998; stroke-width: 25; }
.rw-core { stroke: #ffb3a0; stroke-width: 8; }
.rw-line { stroke: #d9776a; stroke-width: 1.5; stroke-dasharray: 60 40; }
.t-y, .t-yw, .t-r, .t-rw, .t-k, .t-g { fill: none; stroke-linecap: round; stroke-linejoin: round; }
.t-y { stroke: #ffd800; stroke-width: 6; }
.t-yw { stroke: #ffd800; stroke-width: 11; }
.t-r { stroke: #ef2027; stroke-width: 6; }
.t-rw { stroke: #ef2027; stroke-width: 11; }
.t-k { stroke: #2b2b2b; stroke-width: 5; }
.t-g { stroke: #6b6f70; stroke-width: 5; }
.route { fill: none; stroke: #1651b4; stroke-width: 17; stroke-linejoin: round; }

.lb text { font-family: "Noto Sans", "Open Sans", sans-serif; paint-order: stroke; stroke-linejoin: round; }
.lb-big { font-size: 78px; fill: #2e3242; stroke: rgba(255,255,255,.65); stroke-width: 5; }
.lb-mid { font-size: 40px; fill: #2e3242; stroke: rgba(255,255,255,.65); stroke-width: 4; }
.lb-park { font-size: 29px; fill: #3b7767; stroke: rgba(255,255,255,.4); stroke-width: 3; }
.lb-water { font-size: 28px; font-style: italic; fill: #2a66c0; stroke: rgba(255,255,255,.5); stroke-width: 3; }
.lb-street { font-size: 31px; fill: #15181c; stroke: rgba(255,255,255,.7); stroke-width: 4; }

.ic-dot { fill: #8b8b8b; }
.ic-body { fill: #333; stroke: #fff; stroke-width: 2; }
.ic-w { fill: #fff; }
.ic-l { fill: none; stroke: #fff; stroke-width: 1.8; }
.ic-s { fill: none; stroke: #333; stroke-width: 2.6; }
.sb-c { fill: #009a3d; stroke: #fff; stroke-width: 1.5; }
.sb-t { font-family: "Noto Sans", sans-serif; font-weight: 700; font-size: 27px; fill: #fff; text-anchor: middle; }
.tr-o { fill: #fff; stroke: #666; stroke-width: 1.5; }
.tr-d { fill: #333; }
.pin-a { fill: #00b2b0; stroke: #03908f; stroke-width: 1; }
.pin-b { fill: #008689; }
.pin-c { fill: #0b111c; }
.pin-d { fill: #4c5560; }

.summary { height: 338px; flex: none; background: #fff; padding-top: 66px; box-shadow: 0 3px 5px rgba(0,0,0,.22); position: relative; border-top: 1px solid #e5e7e8; }
.duration { margin-left: 238px; font-size: 56px; line-height: 60px; color: #20262f; }
.sum-row { display: flex; align-items: flex-start; margin-top: 35px; }
.walk { width: 49px; height: 74px; margin-left: 129px; fill: #0f151d; flex: none; }
.meta { margin: 26px 0 0 60px; display: flex; align-items: center; font-size: 49px; line-height: 56px; font-weight: 500; color: #6f757c; }
.sep { display: block; width: 5px; height: 41px; background: #b5b8bb; margin: 0 20px 0 18px; }
.eta { margin: 61px 71px 0 auto; font-size: 49px; line-height: 56px; font-weight: 500; color: #6f757c; }

.step { height: 316px; flex: none; background: #fff; border-bottom: 3px solid #e2e3e4; display: flex; align-items: flex-start; }
.step-first { padding-top: 79.5px; }
.step-second { height: 318px; padding-top: 80.5px; }
.step-ic { width: 60px; height: 72px; margin-left: 110px; flex: none; fill: #0f1720; margin-top: 41.5px; }
.pin-ring { fill: none; stroke: #0f1720; stroke-width: 5; }
.step-body { flex: 1; margin-left: 88.5px; min-width: 0; }
.step-title { font-size: 63px; line-height: 72px; color: #232b38; }
.step-sub { display: flex; align-items: flex-start; margin-top: 26px; font-size: 56px; line-height: 64px; color: #6f757c; }
.street { margin-left: 7px; }
.dist { margin-left: auto; width: 200px; margin-right: 51px; text-align: center; }
.list-rest { flex: 1; background: #fff; }

.navbar { height: 168px; flex: none; background: #000; display: flex; align-items: flex-start; }
.nav-back { width: 51px; height: 57px; margin: 56px 0 0 292px; fill: #9b9b9b; }
.nav-home { width: 50px; height: 50px; border-radius: 50%; background: #9b9b9b; margin: 59px 0 0 351px; }
.nav-recent { width: 54px; height: 52px; border-radius: 4px; background: #9b9b9b; margin: 58px 0 0 347px; }
```
